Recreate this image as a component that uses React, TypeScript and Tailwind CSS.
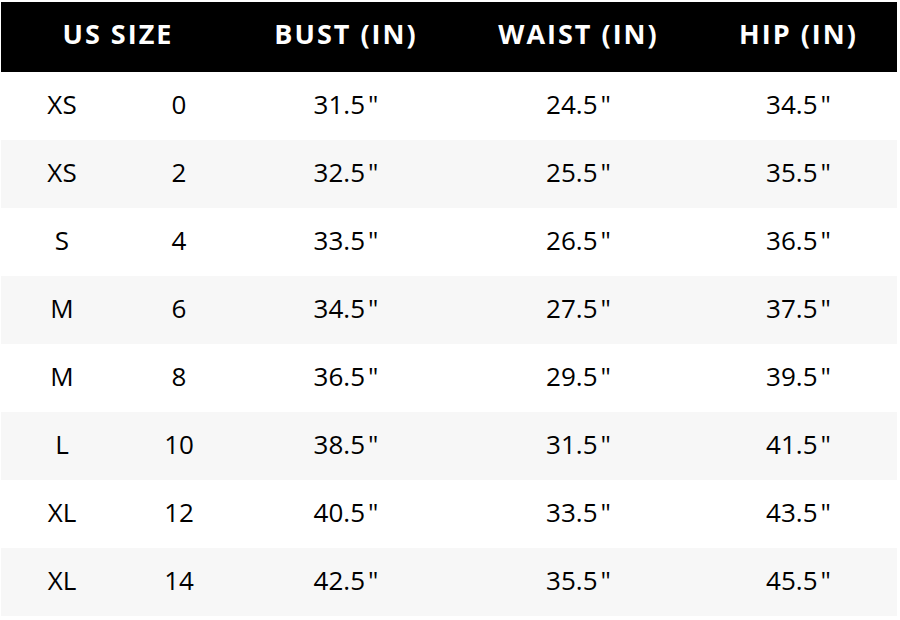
const rows = [
  ["XS", "0", "31.5", "24.5", "34.5"],
  ["XS", "2", "32.5", "25.5", "35.5"],
  ["S", "4", "33.5", "26.5", "36.5"],
  ["M", "6", "34.5", "27.5", "37.5"],
  ["M", "8", "36.5", "29.5", "39.5"],
  ["L", "10", "38.5", "31.5", "41.5"],
  ["XL", "12", "40.5", "33.5", "43.5"],
  ["XL", "14", "42.5", "35.5", "45.5"],
];

const cols = "grid grid-cols-[122px_112px_222px_243px_197px]";

const Inch = ({ v }: { v: string }) => (
  <span>
    {v}
    <span className="ml-[3px]">"</span>
  </span>
);

export default function App() {
  return (
    <div className="w-[900px] h-[620px] bg-white pt-[2px] pl-[1px] font-['Open_Sans',sans-serif]">
      <div className="w-[896px]">
        <div className={`${cols} h-[70px] pb-[5px] bg-black text-white font-bold text-[27px] tracking-[2px] items-center text-center`}>
          <div className="col-span-2">US SIZE</div>
          <div>BUST (IN)</div>
          <div>WAIST (IN)</div>
          <div>HIP (IN)</div>
        </div>
        {rows.map((r, i) => (
          <div
            key={i}
            className={`${cols} h-[68px] pb-[4px] items-center text-center text-[26px] text-black ${i % 2 ? "bg-[#f7f7f7]" : "bg-white"}`}
          >
            <div>{r[0]}</div>
            <div>{r[1]}</div>
            <div><Inch v={r[2]} /></div>
            <div><Inch v={r[3]} /></div>
            <div><Inch v={r[4]} /></div>
          </div>
        ))}
      </div>
    </div>
  );
}
